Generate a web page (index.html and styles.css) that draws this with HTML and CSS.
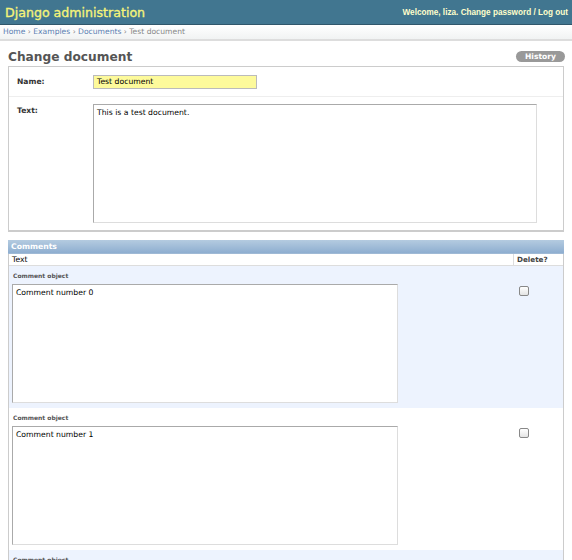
FILE: index.html
```html
<!DOCTYPE html>
<html>
<head>
<meta charset="utf-8">
<link rel="stylesheet" href="styles.css">
</head>
<body>
<div class="header">
  <h1 class="brand">Django administration</h1>
  <div class="tools">Welcome, <strong>liza</strong>. <a href="#">Change password</a> / <a href="#">Log out</a></div>
</div>
<div class="breadcrumbs"><a href="#">Home</a> › <a href="#">Examples</a> › <a href="#">Documents</a> › Test document</div>
<div class="content">
  <div class="title-row">
    <h2 class="title">Change document</h2>
    <a class="history" href="#">History</a>
  </div>
  <div class="module">
    <div class="form-row name-row">
      <label class="label">Name:</label>
      <div class="name-input">Test document</div>
    </div>
    <div class="form-row text-row">
      <label class="label">Text:</label>
      <div class="textarea main-text">This is a test document.</div>
    </div>
  </div>
  <div class="inline">
    <div class="inline-head">Comments</div>
    <div class="cols">
      <div class="col-text">Text</div>
      <div class="col-del">Delete?</div>
    </div>
    <div class="irow alt">
      <p class="original">Comment object</p>
      <div class="fields">
        <div class="col-text"><div class="textarea comment">Comment number 0</div></div>
        <div class="col-del"><span class="check"></span></div>
      </div>
    </div>
    <div class="irow">
      <p class="original">Comment object</p>
      <div class="fields">
        <div class="col-text"><div class="textarea comment">Comment number 1</div></div>
        <div class="col-del"><span class="check"></span></div>
      </div>
    </div>
    <div class="irow alt">
      <p class="original">Comment object</p>
      <div class="fields">
        <div class="col-text"><div class="textarea comment">Comment number 2</div></div>
        <div class="col-del"><span class="check"></span></div>
      </div>
    </div>
  </div>
</div>
</body>
</html>
```
FILE: styles.css
```css
html, body { margin: 0; padding: 0; background: #fff; }
body {
  font-family: "DejaVu Sans", "Liberation Sans", sans-serif;
  font-size: 8px;
  color: #333;
  overflow: hidden;
  height: 560px;
}
a { text-decoration: none; }

.header {
  height: 24px;
  background: #417690;
  border-bottom: 1px solid #30576b;
  display: flex;
  align-items: center;
  justify-content: space-between;
  padding: 0 4px 0 5px;
}
.brand {
  margin: 0;
  font-size: 12.6px;
  font-weight: normal;
  -webkit-text-stroke: 0.35px #f4f379;
  color: #f4f379;
}
.tools {
  font-family: "Liberation Sans", "DejaVu Sans", sans-serif;
  font-size: 8.2px;
  font-weight: bold;
  color: #ffffcc;
  padding-top: 1px;
}
.tools strong { font-weight: bold; }
.tools a { color: #ffffcc; }

.breadcrumbs {
  height: 14px;
  line-height: 14px;
  padding: 0 3px;
  font-size: 7.6px;
  color: #888;
  background: linear-gradient(#ffffff, #f1f3f3);
  border-bottom: 2px solid #ddd;
}
.breadcrumbs a { color: #5b80b2; }

.content { padding: 0 8px 0 8px; }

.title-row {
  display: flex;
  justify-content: space-between;
  align-items: center;
  height: 25px;
}
.title {
  margin: 0;
  font-size: 12.2px;
  font-weight: bold;
  color: #555;
  padding-top: 6px;
}
.history {
  background: #999;
  color: #fff;
  font-size: 7.6px;
  font-weight: bold;
  border-radius: 6px;
  padding: 0 9px;
  height: 11px;
  line-height: 11px;
  margin-right: -1px;
  margin-top: 6px;
}

.module {
  border: 1px solid #ccc;
  border-bottom-width: 2px;
  height: 163px;
}
.form-row {
  display: flex;
  padding: 8px 8px 7px 8px;
  border-bottom: 1px solid #eee;
}
.form-row.text-row { border-bottom: none; padding-top: 7px; }
.label {
  width: 76px;
  font-weight: bold;
  font-size: 7.6px;
  color: #333;
  padding-top: 2px;
}
.name-input {
  width: 156px;
  height: 12px;
  padding: 0 3px;
  background: #fdfa9b;
  border: 1px solid #bbb;
  font-size: 7.7px;
  line-height: 12px;
  color: #000;
}
.textarea {
  border: 1px solid #aaa;
  border-right-color: #ddd;
  border-bottom-color: #ddd;
  background: #fff;
  font-size: 7.7px;
  color: #000;
  padding: 3px 3px;
  box-sizing: border-box;
}
.main-text { width: 444px; height: 119px; }

.inline {
  margin-top: 8px;
  border: 1px solid #ccc;
  border-top: none;
}
.inline-head {
  height: 13px;
  line-height: 13px;
  background: linear-gradient(#b4cbe0, #8eaed0);
  color: #fff;
  font-weight: bold;
  font-size: 7.7px;
  padding: 0 3px;
  margin: 0 -1px;
  border-bottom: 1px solid #9fb9d5;
}
.cols {
  display: flex;
  height: 11px;
  line-height: 11px;
  border-bottom: 1px solid #ddd;
  background: #fff;
  font-size: 7.7px;
  color: #000;
}
.cols .col-text { padding-left: 3px; }
.cols .col-del {
  border-left: 1px solid #ddd;
  padding-left: 3px;
  font-weight: bold;
  color: #444;
  font-size: 7.2px;
}
.col-text { width: 504px; box-sizing: border-box; }
.col-del { flex: 1; }

.irow { padding: 4px 0 0 0; height: 138px; }
.irow.alt { background: #edf3fe; }
.original {
  margin: 0;
  padding: 2px 4px 0 4px;
  font-size: 6px;
  font-weight: bold;
  color: #555;
  box-sizing: border-box;
  height: 14px;
}
.fields { display: flex; }
.fields .col-text { padding-left: 3px; }
.comment { width: 386px; height: 119px; padding: 3px 3px; }
.fields .col-del { padding: 2px 0 0 6px; }
.check {
  display: block;
  width: 8px;
  height: 8px;
  border: 1px solid #888;
  border-radius: 2px;
  background: linear-gradient(#fff, #e4e4e4);
}
```
